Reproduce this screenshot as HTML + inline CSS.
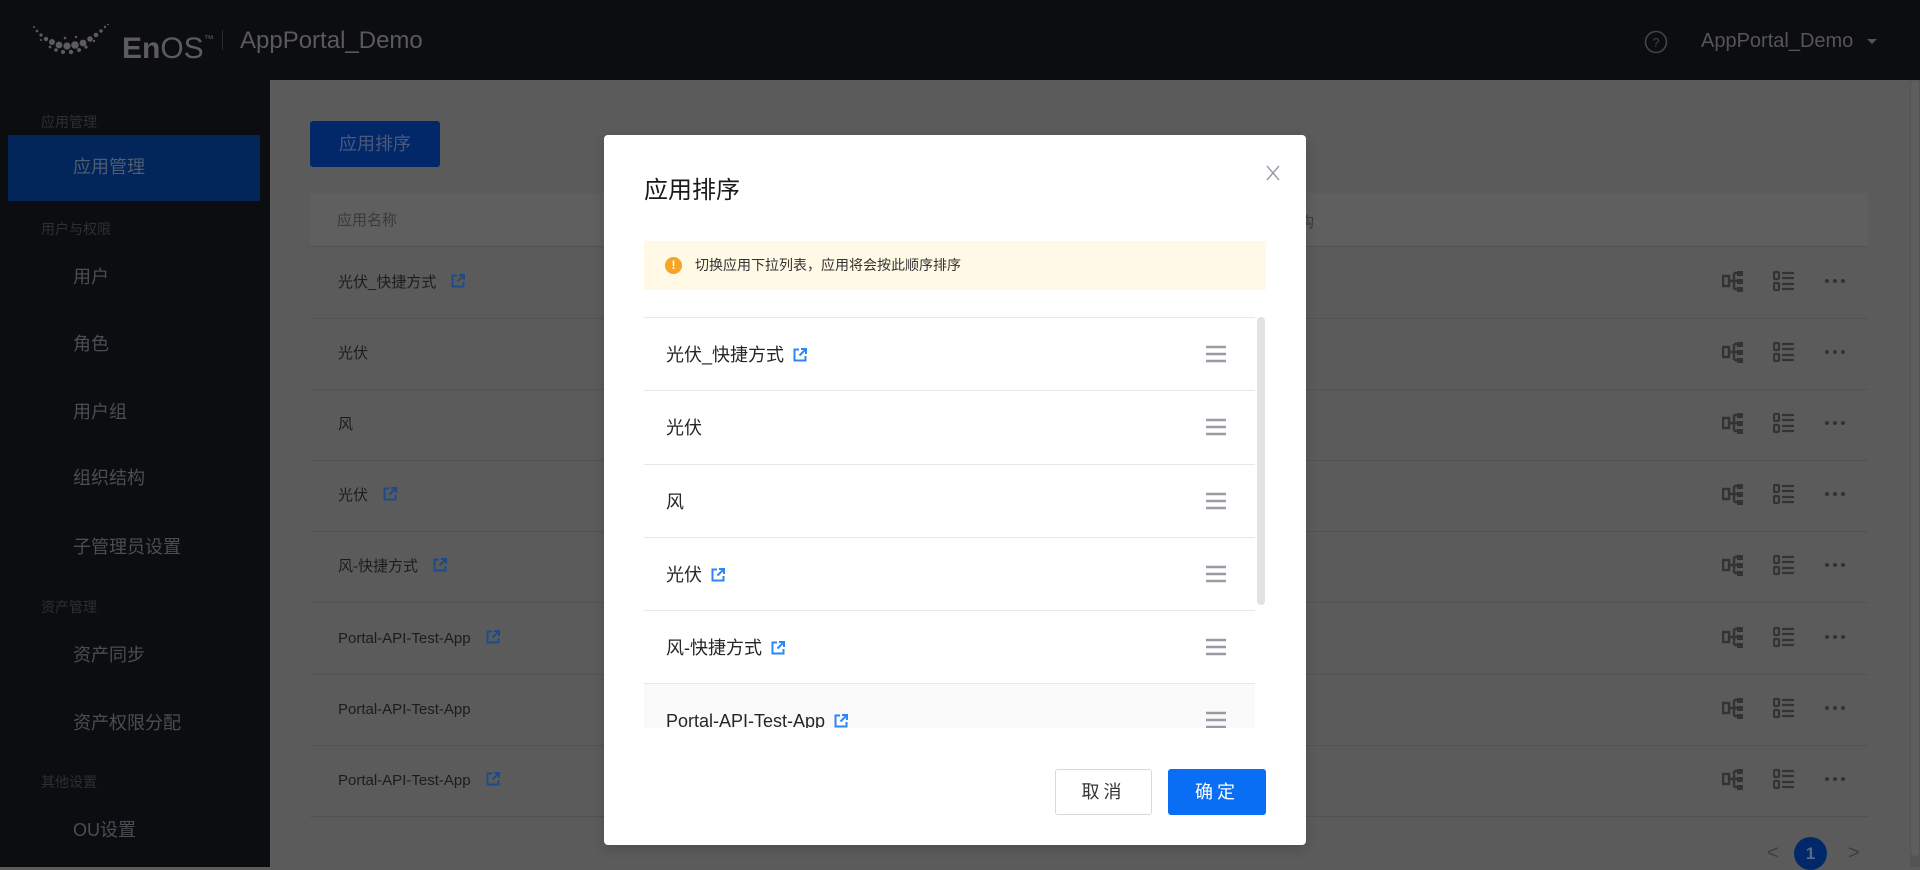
<!DOCTYPE html>
<html><head><meta charset="utf-8">
<style>
*{margin:0;padding:0;box-sizing:border-box}
body{width:1920px;height:867px;overflow:hidden;background:#5b5b5b;font-family:"Liberation Sans","Noto Sans CJK SC",sans-serif;position:relative}
.abs{position:absolute}
#hdr{left:0;top:0;width:1920px;height:80px;background:#0c0d10}
#side{left:0;top:80px;width:270px;height:787px;background:#0c0d10}
.lbl{position:absolute;left:41px;font-size:14px;color:#2e2f33;line-height:20px}
.itm{position:absolute;left:73px;font-size:18px;color:#4c4d52;line-height:24px}
.trow{position:absolute;left:310px;width:1558px;height:71px;border-bottom:1px solid #525252}
.ttx{position:absolute;left:28px;top:24px;font-size:15px;color:#1c1c1c;line-height:22px;white-space:nowrap}
.lk{display:inline-block;vertical-align:-2px;margin-left:14px}
.act{position:absolute;left:1412px;top:22px}
.mrow{position:absolute;left:0;width:611px;height:73px;border-top:1px solid #e8e8e8}
.mtx{position:absolute;left:22px;top:24px;font-size:18px;color:#262626;line-height:26px;white-space:nowrap}
.drag{position:absolute;left:562px;top:27px}
</style></head><body>
<div id="hdr" class="abs">
 <svg class="abs" style="left:32px;top:24px" width="80" height="32" viewBox="0 0 80 32">
  <g fill="#5c5c5c">
   <circle cx="2" cy="3" r="1"/><circle cx="5" cy="7" r="1.3"/><circle cx="9" cy="11" r="1.6"/><circle cx="14" cy="15" r="2.2"/><circle cx="20" cy="18" r="3"/><circle cx="27" cy="21" r="3.4"/><circle cx="35" cy="22" r="3.6"/><circle cx="43" cy="21" r="3.8"/><circle cx="51" cy="19" r="3.4"/><circle cx="58" cy="15" r="2.8"/><circle cx="64" cy="11" r="2.3"/><circle cx="69" cy="7" r="1.7"/><circle cx="73" cy="3" r="1.2"/><circle cx="76" cy="0.5" r="0.9"/>
   <circle cx="24" cy="26" r="1.8"/><circle cx="31" cy="28" r="2"/><circle cx="39" cy="28" r="2.2"/><circle cx="47" cy="26" r="2"/><circle cx="18" cy="23" r="1.4"/><circle cx="54" cy="23" r="1.6"/><circle cx="9" cy="16" r="1"/><circle cx="62" cy="17" r="1.2"/><circle cx="33" cy="14" r="1.3"/><circle cx="44" cy="13" r="1.2"/>
  </g></svg>
 <div class="abs" style="left:122px;top:22px;font-size:30px;line-height:36px;color:#5c5c5c;white-space:nowrap"><b>En</b><span>OS</span><sup style="font-size:10px;vertical-align:16px">™</sup></div>
 <div class="abs" style="left:222px;top:30px;width:1px;height:20px;background:#2a2b2f"></div>
 <div class="abs" style="left:240px;top:26px;font-size:24px;line-height:30px;color:#5a5a5a">AppPortal_Demo</div>
 <svg class="abs" style="left:1644px;top:30px" width="24" height="24" viewBox="0 0 24 24"><circle cx="12" cy="12" r="10.5" fill="none" stroke="#444" stroke-width="1.6"/><text x="12" y="17" font-size="13" text-anchor="middle" fill="#444" font-family="Liberation Sans">?</text></svg>
 <div class="abs" style="left:1701px;top:28px;font-size:20px;line-height:26px;color:#555">AppPortal_Demo</div>
 <div class="abs" style="left:1867px;top:39px;border-left:5px solid transparent;border-right:5px solid transparent;border-top:5px solid #555"></div>
</div>
<div id="side" class="abs">
 <div class="lbl" style="top:32px">应用管理</div>
 <div class="abs" style="left:8px;top:55px;width:252px;height:66px;background:#02255a"></div>
 <div class="itm" style="top:75px;color:#4f5c72">应用管理</div>
 <div class="lbl" style="top:139px">用户与权限</div>
 <div class="itm" style="top:185px">用户</div>
 <div class="itm" style="top:252px">角色</div>
 <div class="itm" style="top:320px">用户组</div>
 <div class="itm" style="top:386px">组织结构</div>
 <div class="itm" style="top:455px">子管理员设置</div>
 <div class="lbl" style="top:517px">资产管理</div>
 <div class="itm" style="top:563px">资产同步</div>
 <div class="itm" style="top:631px">资产权限分配</div>
 <div class="lbl" style="top:692px">其他设置</div>
 <div class="itm" style="top:738px">OU设置</div>
</div>
<div class="abs" style="left:310px;top:121px;width:130px;height:46px;background:#02286a;border-radius:3px;color:#4a5a78;font-size:18px;line-height:46px;text-align:center">应用排序</div>
<div class="abs" style="left:310px;top:193px;width:1558px;height:54px;background:#5f5f5f;border-bottom:1px solid #525252"><div class="abs" style="left:27px;top:16px;font-size:15px;color:#3a3a3a">应用名称</div></div>
<div class="abs" style="left:1910px;top:80px;width:10px;height:787px;background:#545454"></div>
<div class="abs" style="left:1911px;top:80px;width:8px;height:776px;background:#5e5e5e;border-radius:4px"></div>
<svg width="0" height="0" style="position:absolute"><defs>
 <symbol id="lk" viewBox="0 0 16 16"><path d="M7 2.5H2.5v11h11V9" fill="none" stroke="currentColor" stroke-width="2"/><path d="M9 2h5v5M14 2L7.5 8.5" fill="none" stroke="currentColor" stroke-width="2"/></symbol>
 <symbol id="a1" viewBox="0 0 22 22"><rect x="1" y="6" width="6" height="10" fill="none" stroke="currentColor" stroke-width="2.4"/><path d="M7 11h5M12 3v16M12 3h4M12 11h4M12 19h4" fill="none" stroke="currentColor" stroke-width="2.4"/><rect x="15" y="1" width="6" height="5" fill="currentColor"/><rect x="15" y="9" width="6" height="5" fill="currentColor"/><rect x="15" y="17" width="6" height="5" fill="currentColor"/></symbol>
 <symbol id="a2" viewBox="0 0 22 22"><rect x="1" y="2" width="5" height="7" rx="1" fill="none" stroke="currentColor" stroke-width="2.2"/><rect x="1" y="13" width="5" height="7" rx="1" fill="none" stroke="currentColor" stroke-width="2.2"/><path d="M9 3h12M9 8h12M9 14h12M9 19h12" stroke="currentColor" stroke-width="2.2"/></symbol>
</defs></svg>
<div id="rows"></div>
<div class="abs" style="left:1767px;top:843px;font-size:20px;color:#3d3d3d;line-height:20px">&lt;</div>
<div class="abs" style="left:1794px;top:837px;width:33px;height:33px;border-radius:50%;background:#02286a;color:#5a6a85;font-size:17px;font-weight:bold;text-align:center;line-height:33px">1</div>
<div class="abs" style="left:1848px;top:843px;font-size:20px;color:#3d3d3d;line-height:20px">&gt;</div>
<div class="abs" style="left:1299px;top:211px;font-size:15px;color:#3a3a3a">构</div>

<div class="abs" style="left:604px;top:135px;width:702px;height:710px;background:#fff;border-radius:4px;box-shadow:0 4px 12px rgba(0,0,0,.15)">
 <div class="abs" style="left:40px;top:40px;font-size:24px;line-height:32px;color:#1a1a1a">应用排序</div>
 <svg class="abs" style="left:662px;top:30px" width="14" height="16" viewBox="0 0 14 16"><path d="M1 1l12 14M13 1L1 15" stroke="#9a9aa6" stroke-width="1.4"/></svg>
 <div class="abs" style="left:40px;top:106px;width:622px;height:49px;background:#fff9e6">
  <div class="abs" style="left:21px;top:16px;width:17px;height:17px;border-radius:50%;background:#f5a623;color:#fff;font-size:12px;font-weight:bold;text-align:center;line-height:17px">!</div>
  <div class="abs" style="left:51px;top:13px;font-size:14px;line-height:22px;color:#333">切换应用下拉列表，应用将会按此顺序排序</div>
 </div>
 <div class="abs" style="left:40px;top:182px;width:611px;height:411px;overflow:hidden">
  <div class="mrow" style="top:0"><div class="mtx">光伏_快捷方式<svg class="lk" width="16" height="16" style="color:#2d86f5;margin-left:8px"><use href="#lk"/></svg></div><svg class="drag" width="20" height="18"><path d="M0 2h20M0 9h20M0 16h20" stroke="#9a9aa6" stroke-width="2.6"/></svg></div>
  <div class="mrow" style="top:73px"><div class="mtx">光伏</div><svg class="drag" width="20" height="18"><path d="M0 2h20M0 9h20M0 16h20" stroke="#9a9aa6" stroke-width="2.6"/></svg></div>
  <div class="mrow" style="top:147px"><div class="mtx">风</div><svg class="drag" width="20" height="18"><path d="M0 2h20M0 9h20M0 16h20" stroke="#9a9aa6" stroke-width="2.6"/></svg></div>
  <div class="mrow" style="top:220px"><div class="mtx">光伏<svg class="lk" width="16" height="16" style="color:#2d86f5;margin-left:8px"><use href="#lk"/></svg></div><svg class="drag" width="20" height="18"><path d="M0 2h20M0 9h20M0 16h20" stroke="#9a9aa6" stroke-width="2.6"/></svg></div>
  <div class="mrow" style="top:293px"><div class="mtx">风-快捷方式<svg class="lk" width="16" height="16" style="color:#2d86f5;margin-left:8px"><use href="#lk"/></svg></div><svg class="drag" width="20" height="18"><path d="M0 2h20M0 9h20M0 16h20" stroke="#9a9aa6" stroke-width="2.6"/></svg></div>
  <div class="mrow" style="top:366px;background:#fafafa"><div class="mtx" style="font-size:18px">Portal-API-Test-App<svg class="lk" width="16" height="16" style="color:#2d86f5;margin-left:8px"><use href="#lk"/></svg></div><svg class="drag" width="20" height="18"><path d="M0 2h20M0 9h20M0 16h20" stroke="#9a9aa6" stroke-width="2.6"/></svg></div>
 </div>
 <div class="abs" style="left:653px;top:182px;width:8px;height:288px;background:#e2e2e2;border-radius:4px"></div>
 <div class="abs" style="left:451px;top:634px;width:97px;height:46px;border:1px solid #d9d9d9;border-radius:3px;font-size:18px;color:#333;text-align:center;line-height:44px;letter-spacing:4px">取消</div>
 <div class="abs" style="left:564px;top:634px;width:98px;height:46px;background:#0a6ef5;border-radius:3px;font-size:18px;color:#fff;text-align:center;line-height:46px;letter-spacing:4px">确定</div>
</div>
<script>
var t=[["光伏_快捷方式",1],["光伏",0],["风",0],["光伏",1],["风-快捷方式",1],["Portal-API-Test-App",1],["Portal-API-Test-App",0],["Portal-API-Test-App",1]];
var h="";t.forEach(function(r,i){var top=248+i*71.1;
h+='<div class="trow" style="top:'+top+'px"><div class="ttx">'+r[0]+(r[1]?'<svg class="lk" width="16" height="16" style="color:#1d4b8a"><use href="#lk"/></svg>':'')+'</div>'+
'<svg class="act" width="22" height="22" style="color:#333"><use href="#a1"/></svg><svg class="act" width="22" height="22" style="left:1463px;color:#333"><use href="#a2"/></svg>'+
'<svg class="act" width="22" height="22" style="left:1514px"><circle cx="3" cy="11" r="2" fill="#333"/><circle cx="11" cy="11" r="2" fill="#333"/><circle cx="19" cy="11" r="2" fill="#333"/></svg></div>';});
document.getElementById("rows").innerHTML=h;
</script>
</body></html>
